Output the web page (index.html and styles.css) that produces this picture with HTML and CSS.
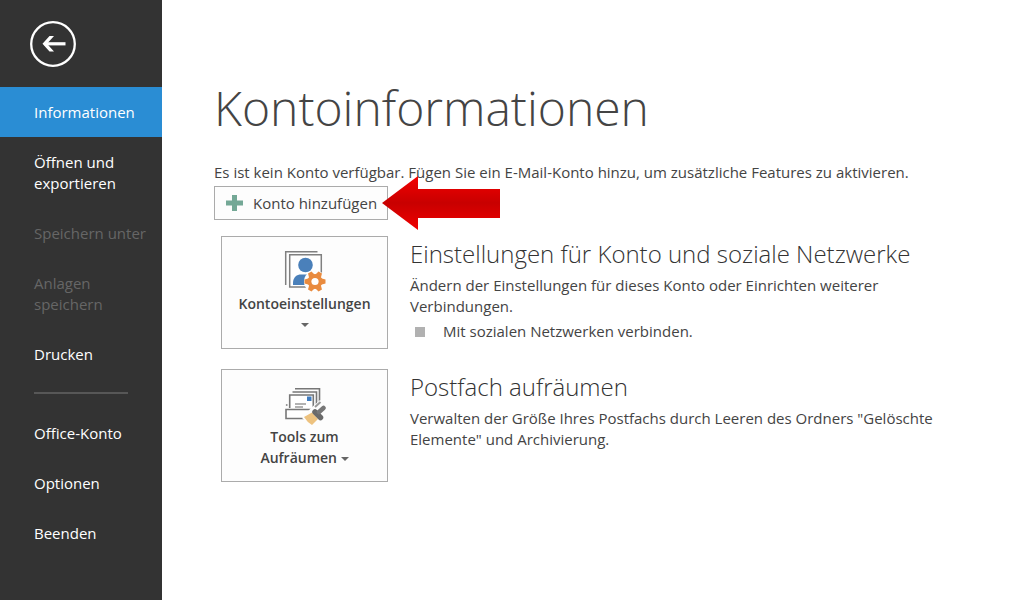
FILE: index.html
```html
<!DOCTYPE html>
<html lang="de">
<head>
	<meta charset="UTF-8">
	<meta name="viewport" content="width=device-width, initial-scale=1.0">
	<title>Kontoinformationen</title>
	<link rel="stylesheet" href="styles.css">
</head>
<body>
	<aside class="sidebar">
		<button class="back" type="button" aria-label="Zurück">
			<svg width="48" height="48" viewBox="0 0 48 48" fill="none" stroke="#fff">
				<circle cx="24" cy="24" r="21.8" stroke-width="2.3"/>
				<path d="M15.5 23.8H36.5" stroke-width="3.2"/>
				<path d="M20.5 16H25l-7 7.800 7 7.800h-4.500L13.500 23.800z" fill="#fff" stroke="none"/>
			</svg>
		</button>
		<nav class="menu">
			<a class="active" href="#info">Informationen</a>
			<a href="#open">Öffnen und exportieren</a>
			<a class="disabled" href="#save" aria-disabled="true">Speichern unter</a>
			<a class="disabled" href="#attachments" aria-disabled="true">Anlagen speichern</a>
			<a href="#print">Drucken</a>
			<hr>
			<a href="#account">Office-Konto</a>
			<a href="#options">Optionen</a>
			<a href="#exit">Beenden</a>
		</nav>
	</aside>

	<main>
		<h1>Kontoinformationen</h1>
		<p class="notice">Es ist kein Konto verfügbar. Fügen Sie ein E-Mail-Konto hinzu, um zusätzliche Features zu aktivieren.</p>

		<div class="add">
			<button class="add-account" type="button">
				<svg width="17" height="17" viewBox="0 0 17 17">
					<path d="M6 0h5v5.500h6v5h-6V16H6v-5.500H0v-5h6z" fill="#74a896"/>
				</svg>
				Konto hinzufügen
			</button>
			<svg class="pointer" width="120" height="56" viewBox="0 0 120 56">
				<defs>
					<linearGradient id="red" x1="0" y1="0" x2="0" y2="1">
						<stop offset="0" stop-color="#f40000"/>
						<stop offset=".5" stop-color="#c80000"/>
						<stop offset="1" stop-color="#f00000"/>
					</linearGradient>
				</defs>
				<path d="M1 27L37 0v13h82v29H37v12z" fill="url(#red)"/>
			</svg>
		</div>

		<section class="row">
			<button class="tile" type="button">
				<svg width="42" height="42" viewBox="0 0 42 42">
					<path d="M1.7 34V.8H33.5" fill="none" stroke="#808080" stroke-width="1.5"/>
					<path d="M5.7 3.7H37.3V36H5.7z" fill="#fff" stroke="#808080" stroke-width="1.5"/>
					<path d="M9 34v-2c0-6 4-8.500 8-8.500h7V34z" fill="#4a80ba"/>
					<circle cx="21.5" cy="14" r="8.6" fill="#fff"/>
					<circle cx="21.5" cy="14" r="7.300" fill="#4a80ba"/>
					<g transform="translate(31 30.500)">
						<circle r="11" fill="#fdfdfd"/>
						<g fill="#e98b3f">
							<circle r="7.500"/>
							<path id="teeth" d="M-2 -10.500h4L3.200-6h-6.400zM-3.200 6h6.400L2 10.500h-4z" transform="rotate(30)"/>
							<use href="#teeth" transform="rotate(60)"/>
							<use href="#teeth" transform="rotate(120)"/>
						</g>
						<circle r="3.600" fill="#fff"/>
					</g>
				</svg>
				<span>Kontoeinstellungen</span>
				<i class="caret below"></i>
			</button>
			<div class="info">
				<h2>Einstellungen für Konto und soziale Netzwerke</h2>
				<p>Ändern der Einstellungen für dieses Konto oder Einrichten weiterer Verbindungen.</p>
				<ul>
					<li>Mit sozialen Netzwerken verbinden.</li>
				</ul>
			</div>
		</section>

		<section class="row">
			<button class="tile" type="button">
				<svg width="42" height="42" viewBox="0 0 42 42">
					<g fill="none" stroke="#777" stroke-width="1.6">
						<path d="M11 4.700H35.500V20M8.500 8H32.500V22"/>
						<path d="M5.700 24V11H29.300V24" fill="#fff"/>
						<path d="M2.700 20v2M11 20h11M11 23h8" stroke="#999"/>
						<path d="M30 34.500H2V25.500h28" fill="#fff"/>
					</g>
					<path d="M23 12.500h4.500V17H23z" fill="#3f7cc0"/>
					<path d="M27 24l9-8 5 3 1 10-9 8-6 5-9-8z" fill="#fdfdfd"/>
					<path d="M20 33l8-4.500 6 6.500-6 6q-5-3-8-8z" fill="#edc27f"/>
					<path d="M31 28l5.500 5.500" stroke="#6a6a6a" stroke-width="5.500" stroke-linecap="round"/>
					<path d="M35 28l4.500-4" stroke="#777" stroke-width="4.500" stroke-linecap="round"/>
					<path d="M31 23l5.500-5" stroke="#999" stroke-width="2"/>
				</svg>
				<span>Tools zum<br>Aufräumen <i class="caret"></i></span>
			</button>
			<div class="info">
				<h2>Postfach aufräumen</h2>
				<p>Verwalten der Größe Ihres Postfachs durch Leeren des Ordners "Gelöschte Elemente" und Archivierung.</p>
			</div>
		</section>
	</main>
</body>
</html>
```
FILE: styles.css
```css
* {
	box-sizing: border-box;
}

body {
	display: flex;
	min-height: 100vh;
	margin: 0;
	background: #fff;
	color: #444;
	font: 15px/21px "Open Sans", "Noto Sans", sans-serif;
}

h1, h2, p, ul {
	margin: 0;
	padding: 0;
}

button {
	border: 1px solid #ababab;
	background: #fdfdfd;
	color: #444;
	font: inherit;
	cursor: pointer;
}

.sidebar {
	flex: none;
	width: 162px;
	background: #333;
}

.back {
	display: block;
	margin: 20px 0 19px 29px;
	padding: 0;
	border: 0;
	background: none;
}

.back svg {
	display: block;
}

.menu a {
	display: block;
	padding: 15px 12px 14px 34px;
	color: #fff;
	text-decoration: none;
}

.menu .disabled {
	color: #666;
}

.menu .active {
	background: #2a8dd4;
}

.menu hr {
	height: 2px;
	margin: 13px 34px 14px;
	border: 0;
	background: #575757;
}

main {
	flex: 1;
	padding: 72px 52px 0;
}

h1 {
	font-size: 48px;
	font-weight: 300;
	line-height: 72px;
}

.notice {
	margin-top: 18px;
}

.add {
	position: relative;
	width: max-content;
	margin-top: 3px;
}

.add-account {
	display: flex;
	align-items: center;
	gap: 10px;
	height: 34px;
	padding: 0 10px 0 11px;
}

/* lies over the button's right edge and the line above */
.pointer {
	position: absolute;
	top: -10px;
	left: 167px;
}

.row {
	display: flex;
	gap: 22px;
	margin: 16px 0 20px 7px;
}

.tile {
	display: flex;
	flex: none;
	flex-direction: column;
	align-items: center;
	width: 167px;
	height: 113px;
	padding: 14px 0 0;
	font-size: 14px;
	font-weight: 600;
}

.caret {
	display: inline-block;
	border: 4px solid transparent;
	border-top-color: #666;
	border-bottom: 0;
	vertical-align: middle;
}

.below {
	margin-top: 9px;
}

.info {
	max-width: 540px;
}

h2 {
	margin: 2px 0 5px;
	color: #333;
	font-size: 24px;
	font-weight: 300;
	line-height: 32px;
}

ul {
	margin-top: 4px;
	list-style: none;
}

li {
	display: flex;
	align-items: center;
	gap: 18px;
	padding-left: 5px;
}

li::before {
	width: 10px;
	height: 10px;
	background: #b1b1b1;
	content: "";
}
```
